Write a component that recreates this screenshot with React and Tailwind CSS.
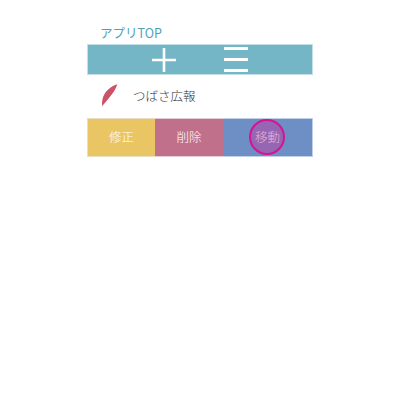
const jp = "font-['Noto_Sans_CJK_JP','Noto_Sans',sans-serif]";

function Feather() {
  return (
    <svg width="18" height="24" viewBox="0 0 18 24" className="block">
      <path d="M16.2 0.3C10.5 2 5 6.5 2.5 12C1.2 15.5 0.6 19 1.4 22.2C3 19.5 5.4 17.4 7.6 14.5C10.8 10.4 14.8 6 16.2 0.3Z" fill="#cb5366" />
    </svg>
  );
}

export default function App() {
  return (
    <div className={`${jp} h-[417px] w-[400px] bg-white pt-[24px]`}>
      <div className="mx-auto w-[226px]">
        <p className="h-[20px] pl-[13px] text-[12.5px] leading-[17px] text-[#4fa3b5]">アプリTOP</p>

        <div className="flex h-[31px] items-center justify-center gap-[48px] border border-[#c3e0e6] bg-[#74b6c5]">
          <svg width="24" height="24" viewBox="0 0 24 24" className="block">
            <path d="M0 12H24M12 0V24" stroke="#fff" strokeWidth="2.6" />
          </svg>
          <div className="flex h-[25px] w-[24px] flex-col justify-between">
            <div className="h-[3px] bg-white" />
            <div className="h-[3px] bg-white" />
            <div className="h-[3px] bg-white" />
          </div>
        </div>

        <div className="flex h-[43px] items-center pl-[14px]">
          <div className="mb-[2px]">
            <Feather />
          </div>
          <span className="ml-[14px] text-[12.5px] font-light text-[#333]">つばさ広報</span>
        </div>

        <div className="flex h-[39px] text-[12.5px] font-light text-white">
          <div className="flex w-[68px] items-center justify-center border-y border-l border-[#e9e0c4] bg-[#eac564] pb-[1px]">修正</div>
          <div className="flex w-[68px] items-center justify-center border-y border-[#e5cdd6] bg-[#c1708c] pb-[1px]">削除</div>
          <div className="relative flex flex-1 items-center justify-center border-y border-r border-[#c0cfe6] bg-[#6d8fc6] pb-[1px]">
            <div className="absolute top-[0px] left-[26px] h-[36px] w-[36px] rounded-full border-2 border-[#d9128f] bg-[#9566b3]" />
            <span className="relative text-[#e6b5d8]">移動</span>
          </div>
        </div>
      </div>
    </div>
  );
}
